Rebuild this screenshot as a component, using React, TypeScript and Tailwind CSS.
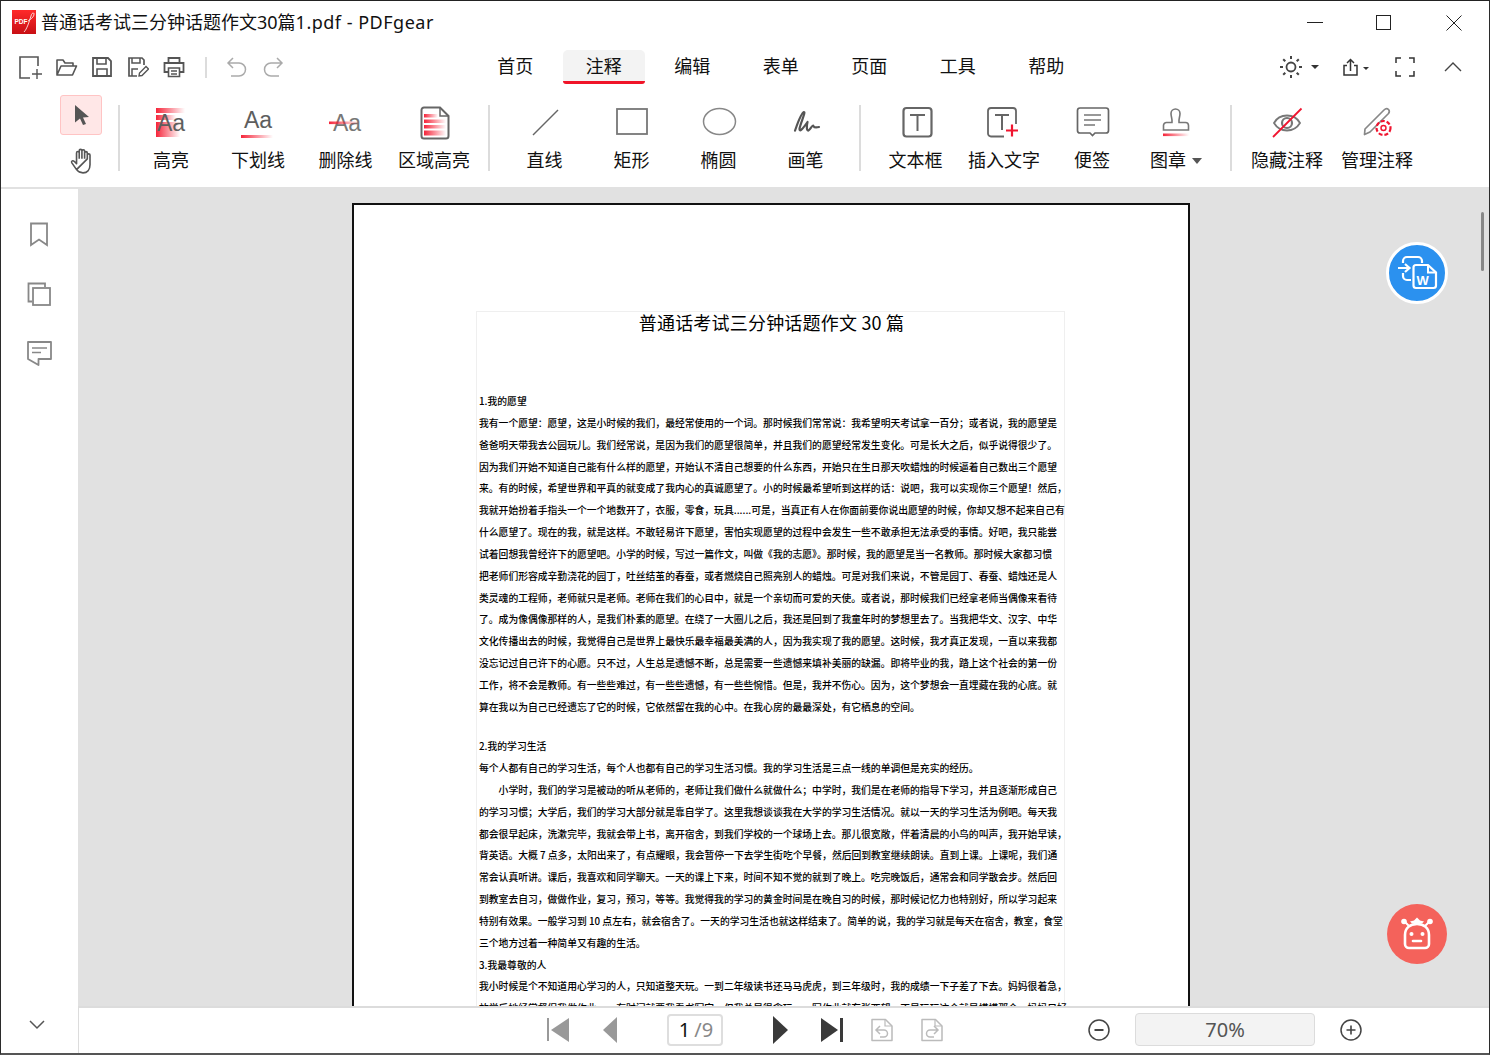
import type { ReactNode } from 'react';

const Icon = ({ children, size = 36, vb = 36, className = '' }: { children: ReactNode; size?: number; vb?: number; className?: string }) => (
  <svg width={size} height={size} viewBox={`0 0 ${vb} ${vb}`} fill="none" className={`block shrink-0 ${className}`}>
    {children}
  </svg>
);

const AaText = ({ x, y, fill = '#5e5e5e' }: { x: number; y: number; fill?: string }) => (
  <text x={x} y={y} fontFamily="Liberation Sans, sans-serif" fontSize="23" fill={fill}>
    Aa
  </text>
);

const ribbonGroups: { pad: number; items: { label: string; w: number; caret?: boolean; icon: ReactNode }[] }[] = [
  {
    pad: 7,
    items: [
      {
        label: '高亮',
        w: 88,
        icon: (
          <Icon>
            <rect x="3" y="4" width="29" height="5" fill="url(#redFade)" />
            <rect x="3" y="11" width="20" height="5" fill="url(#redFade)" />
            <rect x="3" y="18" width="24" height="15" fill="url(#redFade)" />
            <AaText x={4} y={27} />
          </Icon>
        ),
      },
      {
        label: '下划线',
        w: 86,
        icon: (
          <Icon>
            <AaText x={4} y={24} />
            <rect x="1" y="31" width="32" height="3" fill="url(#redFade)" />
          </Icon>
        ),
      },
      {
        label: '删除线',
        w: 89,
        icon: (
          <Icon>
            <AaText x={5} y={27} fill="#777" />
            <rect x="1" y="17.5" width="31" height="2.6" fill="url(#redFade)" />
          </Icon>
        ),
      },
      {
        label: '区域高亮',
        w: 88,
        icon: (
          <Icon>
            <path d="M8 3.5H24L32.5 12V32a2.5 2.5 0 0 1-2.5 2.5H8A2.5 2.5 0 0 1 5.5 32V6A2.5 2.5 0 0 1 8 3.5Z" stroke="#666" strokeWidth="2" />
            <path d="M24 3.5V12H32.5" stroke="#666" strokeWidth="1.5" />
            <rect x="8" y="10" width="14" height="3.5" fill="url(#redFade)" />
            <rect x="8" y="15.5" width="22" height="3.5" fill="url(#redFade)" />
            <rect x="8" y="21" width="22" height="3.5" fill="url(#redFade)" />
            <rect x="8" y="26.5" width="22" height="5" fill="url(#redFade)" />
          </Icon>
        ),
      },
    ],
  },
  {
    pad: 11,
    items: [
      {
        label: '直线',
        w: 87,
        icon: (
          <Icon>
            <path d="M6 31L31 6" stroke="#666" strokeWidth="1.4" />
          </Icon>
        ),
      },
      {
        label: '矩形',
        w: 87,
        icon: (
          <Icon>
            <rect x="3" y="5" width="30" height="25" stroke="#777" strokeWidth="1.8" />
          </Icon>
        ),
      },
      {
        label: '椭圆',
        w: 87,
        icon: (
          <Icon>
            <ellipse cx="18.5" cy="17.5" rx="16" ry="13" stroke="#888" strokeWidth="1.5" />
          </Icon>
        ),
      },
      {
        label: '画笔',
        w: 87,
        icon: (
          <Icon>
            <path d="M7 26.700C10 18 13 9 16 8C18 8 12 20 11.500 25C11.500 28 14 26 19.500 18C18.500 22 18.500 27 20.500 26.500C22 26 24 21.500 25 21.500C26 22 25 24.500 31 23" stroke="#555" strokeWidth="2.200" strokeLinecap="round" strokeLinejoin="round" />
          </Icon>
        ),
      },
    ],
  },
  {
    pad: 10,
    items: [
      {
        label: '文本框',
        w: 89,
        icon: (
          <Icon>
            <rect x="5.500" y="4" width="28" height="28.500" rx="3" stroke="#666" strokeWidth="2.200" />
            <path d="M12 11H27M19.500 11V27" stroke="#666" strokeWidth="2" />
          </Icon>
        ),
      },
      {
        label: '插入文字',
        w: 88,
        icon: (
          <Icon>
            <path d="M18 32.500H5A3 3 0 0 1 2 29.500V7A3 3 0 0 1 5 4H27A3 3 0 0 1 30 7V20" stroke="#666" strokeWidth="1.800" />
            <path d="M9 11H23M16 11V26" stroke="#666" strokeWidth="2" />
            <path d="M20 26.500H32M26 20.500V32.500" stroke="#f0142f" strokeWidth="2.200" />
          </Icon>
        ),
      },
      {
        label: '便签',
        w: 88,
        icon: (
          <Icon>
            <path d="M6 4H32A2.500 2.500 0 0 1 34.500 6.500V26.500A2.500 2.500 0 0 1 32 29H21L18.500 31.500L16 29H6A2.500 2.500 0 0 1 3.500 26.500V6.500A2.500 2.500 0 0 1 6 4Z" stroke="#666" strokeWidth="1.700" />
            <path d="M10 11H27M10 16H27M10 21H21" stroke="#777" strokeWidth="1.600" />
          </Icon>
        ),
      },
      {
        label: '图章',
        w: 84,
        caret: true,
        icon: (
          <Icon className="-ml-[6px]">
            <path d="M15 18.500C15.500 15 14 13 14 9.500A4.500 4.500 0 0 1 23 9.500C23 13 21.500 15 22 18.500H28.500A3 3 0 0 1 31.500 21.500V26H6.500V21.500A3 3 0 0 1 9.500 18.500Z" stroke="#777" strokeWidth="1.600" />
            <rect x="6" y="29.500" width="26" height="2.600" fill="url(#redFade)" />
          </Icon>
        ),
      },
    ],
  },
  {
    pad: 10,
    items: [
      {
        label: '隐藏注释',
        w: 90,
        icon: (
          <Icon>
            <path d="M5 19C8 13.500 13 11.500 18 11.500C23 11.500 28 13.500 31 19C28 24 23 26.500 18 26.500C13 26.500 8 24 5 19Z" stroke="#777" strokeWidth="1.800" />
            <circle cx="18" cy="19" r="5" stroke="#777" strokeWidth="2.200" />
            <path d="M4 33L32.500 4.500" stroke="#f0142f" strokeWidth="1.800" />
          </Icon>
        ),
      },
      {
        label: '管理注释',
        w: 90,
        icon: (
          <Icon>
            <path d="M5.500 30.500L6 25L25 6C26.500 4.500 28.500 4.500 29.500 5.500C30.500 6.500 30.500 8 29.500 9.500L11 28Z" stroke="#888" strokeWidth="1.700" strokeLinejoin="round" />
            <circle cx="24.500" cy="24" r="7" stroke="#f0142f" strokeWidth="2.200" strokeDasharray="4 2" />
            <circle cx="24.500" cy="24" r="2.500" stroke="#f0142f" strokeWidth="1.400" />
          </Icon>
        ),
      },
    ],
  },
];

const tabs = ['首页', '注释', '编辑', '表单', '页面', '工具', '帮助'];

const firstSection = [
  '我有一个愿望：愿望，这是小时候的我们，最经常使用的一个词。那时候我们常常说：我希望明天考试拿一百分；或者说，我的愿望是',
  '爸爸明天带我去公园玩儿。我们经常说，是因为我们的愿望很简单，并且我们的愿望经常发生变化。可是长大之后，似乎说得很少了。',
  '因为我们开始不知道自己能有什么样的愿望，开始认不清自己想要的什么东西，开始只在生日那天吹蜡烛的时候逼着自己数出三个愿望',
  '来。有的时候，希望世界和平真的就变成了我内心的真诚愿望了。小的时候最希望听到这样的话：说吧，我可以实现你三个愿望！然后，',
  '我就开始扮着手指头一个一个地数开了，衣服，零食，玩具......可是，当真正有人在你面前要你说出愿望的时候，你却又想不起来自己有',
  '什么愿望了。现在的我，就是这样。不敢轻易许下愿望，害怕实现愿望的过程中会发生一些不敢承担无法承受的事情。好吧，我只能尝',
  '试着回想我曾经许下的愿望吧。小学的时候，写过一篇作文，叫做《我的志愿》。那时候，我的愿望是当一名教师。那时候大家都习惯',
  '把老师们形容成辛勤浇花的园丁，吐丝结茧的春蚕，或者燃烧自己照亮别人的蜡烛。可是对我们来说，不管是园丁、春蚕、蜡烛还是人',
  '类灵魂的工程师，老师就只是老师。老师在我们的心目中，就是一个亲切而可爱的天使。或者说，那时候我们已经拿老师当偶像来看待',
  '了。成为像偶像那样的人，是我们朴素的愿望。在绕了一大圈儿之后，我还是回到了我童年时的梦想里去了。当我把华文、汉字、中华',
  '文化传播出去的时候，我觉得自己是世界上最快乐最幸福最美满的人，因为我实现了我的愿望。这时候，我才真正发现，一直以来我都',
  '没忘记过自己许下的心愿。只不过，人生总是遗憾不断，总是需要一些遗憾来填补美丽的缺漏。即将毕业的我，踏上这个社会的第一份',
  '工作，将不会是教师。有一些些难过，有一些些遗憾，有一些些惋惜。但是，我并不伤心。因为，这个梦想会一直埋藏在我的心底。就',
  '算在我以为自己已经遗忘了它的时候，它依然留在我的心中。在我心房的最最深处，有它栖息的空间。',
];

const secondSection = [
  '每个人都有自己的学习生活，每个人也都有自己的学习生活习惯。我的学习生活是三点一线的单调但是充实的经历。',
  '　　小学时，我们的学习是被动的听从老师的，老师让我们做什么就做什么；中学时，我们是在老师的指导下学习，并且逐渐形成自己',
  '的学习习惯；大学后，我们的学习大部分就是靠自学了。这里我想谈谈我在大学的学习生活情况。就以一天的学习生活为例吧。每天我',
  '都会很早起床，洗漱完毕，我就会带上书，离开宿舍，到我们学校的一个球场上去。那儿很宽敞，伴着清晨的小鸟的叫声，我开始早读，',
  '背英语。大概 7 点多，太阳出来了，有点耀眼，我会暂停一下去学生街吃个早餐，然后回到教室继续朗读。直到上课。上课呢，我们通',
  '常会认真听讲。课后，我喜欢和同学聊天。一天的课上下来，时间不知不觉的就到了晚上。吃完晚饭后，通常会和同学散会步。然后回',
  '到教室去自习，做做作业，复习，预习，等等。我觉得我的学习的黄金时间是在晚自习的时候，那时候记忆力也特别好，所以学习起来',
  '特别有效果。一般学习到 10 点左右，就会宿舍了。一天的学习生活也就这样结束了。简单的说，我的学习就是每天在宿舍，教室，食堂',
  '三个地方过着一种简单又有趣的生活。',
];

const thirdSection = [
  '我小时候是个不知道用心学习的人，只知道整天玩。一到二年级读书还马马虎虎，到三年级时，我的成绩一下子差了下去。妈妈很着急，',
  '放学后她经常督促我做作业，一有时间就要我看书写字，但我总是很贪玩，一写作业就东张西望，不是玩玩这个就是摸摸那个，妈妈只好',
];

const PdfLines = ({ lines }: { lines: string[] }) => (
  <>
    {lines.map((line) => (
      <p key={line} className="h-[21.85px] whitespace-pre leading-[21.85px]">
        {line}
      </p>
    ))}
  </>
);

const RibbonItem = ({ label, w, caret, icon }: { label: string; w: number; caret?: boolean; icon: ReactNode }) => (
  <div className="flex flex-col items-center" style={{ width: w }}>
    <div className="mt-[12px] flex h-[36px] items-center justify-center">{icon}</div>
    <div className={`mt-[8px] flex h-[24px] items-center gap-[6px] text-[18px] leading-[24px] text-[#111] ${caret ? 'mr-[4px]' : ''}`}>
      <span>{label}</span>
      {caret && <span className="mt-[2px] h-0 w-0 border-x-[5px] border-t-[6px] border-x-transparent border-t-[#555]" />}
    </div>
  </div>
);

const App = () => {
  return (
    <div className="relative flex h-[1055px] w-[1490px] flex-col overflow-hidden border-x border-t border-b-2 border-x-[#2b2b2b] border-b-[#555] border-t-[#222] bg-white font-['Noto_Sans','Noto_Sans_CJK_SC',sans-serif] text-[#111]">
      <svg width="0" height="0" className="absolute">
        <defs>
          <linearGradient id="redFade" x1="0" x2="1" y1="0" y2="0">
            <stop offset="0" stopColor="#f5192f" stopOpacity="0.95" />
            <stop offset="1" stopColor="#f5192f" stopOpacity="0" />
          </linearGradient>
          <linearGradient id="logoRed" x1="0" x2="0" y1="0" y2="1">
            <stop offset="0" stopColor="#ff2a2a" />
            <stop offset="1" stopColor="#c80f14" />
          </linearGradient>
        </defs>
      </svg>

      {/* Title bar */}
      <div className="flex h-[41px] shrink-0 items-center">
        <div className="ml-[11px]">
          <svg width="24" height="24" viewBox="0 0 24 24" className="block">
            <rect width="24" height="24" fill="url(#logoRed)" />
            <text x="2.500" y="14" fontFamily="Liberation Sans, sans-serif" fontSize="6.500" fontWeight="700" fill="#fff">
              PDF
            </text>
            <path d="M12 22C15 19 17 12 19 6C19.500 3 22 2 22 4C22 7 19 9 16 11" stroke="#fff" strokeWidth="0.800" fill="none" />
          </svg>
        </div>
        <span className="ml-[5px] whitespace-pre text-[18px] leading-[24px]">
          普通话考试三分钟话题作文30篇<span className="tracking-[0.5px]">1.pdf - PDFgear</span>
        </span>
        <div className="ml-auto mt-[2px] flex items-center">
          <div className="h-px w-[16px] bg-[#222]" />
          <div className="ml-[53px] h-[15px] w-[15px] border border-[#222]" />
          <Icon size={16} vb={16} className="ml-[55px] mr-[27px]">
            <path d="M0.500 0.500L15.500 15.500M15.500 0.500L0.500 15.500" stroke="#222" strokeWidth="1" />
          </Icon>
        </div>
      </div>

      {/* Quick access + tabs */}
      <div className="flex h-[50px] shrink-0 items-center">
        <div className="ml-[11px] flex w-[180px] items-center">
          <div className="flex w-[36px] justify-center">
            <Icon size={24} vb={24}>
              <path d="M20 11V2H2V23H12" stroke="#555" strokeWidth="1.600" />
              <path d="M14 19H24M19 14V24" stroke="#555" strokeWidth="1.400" />
            </Icon>
          </div>
          <div className="flex w-[37px] justify-center">
            <Icon size={24} vb={24}>
              <path d="M3 20V5H9L11 8H19V11M3 20H18.500L22.500 11H7L3 20Z" stroke="#555" strokeWidth="1.600" strokeLinejoin="round" />
            </Icon>
          </div>
          <div className="flex w-[36px] justify-center">
            <Icon size={22} vb={22}>
              <path d="M2 2H17L20 5V20H2Z" stroke="#555" strokeWidth="1.800" />
              <path d="M6 2V8H15V2M6 20V13H16V20" stroke="#555" strokeWidth="1.600" />
            </Icon>
          </div>
          <div className="flex w-[36px] justify-center">
            <Icon size={22} vb={22}>
              <path d="M10 20H2V2H15L17 4V9" stroke="#555" strokeWidth="1.700" />
              <path d="M5 2V7H13V2M5 20V13H11" stroke="#555" strokeWidth="1.500" />
              <path d="M12 20L12.500 17L19 10.500L21.500 13L15 19.500Z" stroke="#555" strokeWidth="1.400" />
            </Icon>
          </div>
          <div className="flex w-[36px] justify-center">
            <Icon size={22} vb={22}>
              <path d="M5.500 7V2H16.500V7M5.500 16H1.500V7H20.500V16H16.500" stroke="#555" strokeWidth="1.800" />
              <path d="M5.500 12H16.500V20.500H5.500ZM8 15H14M8 18H14" stroke="#555" strokeWidth="1.600" />
            </Icon>
          </div>
        </div>
        <div className="ml-[13px] h-[21px] w-[2px] bg-[#dcdcdc]" />
        <div className="ml-[19px]">
          <Icon size={22} vb={22}>
            <path d="M7 2L2 7L7 12M2 7H13A6.500 6.500 0 0 1 13 20H5" stroke="#aaa" strokeWidth="1.500" />
          </Icon>
        </div>
        <div className="ml-[14px]">
          <Icon size={22} vb={22}>
            <path d="M15 2L20 7L15 12M20 7H9A6.500 6.500 0 0 0 9 20H17" stroke="#aaa" strokeWidth="1.500" />
          </Icon>
        </div>

        <div className="ml-[187px] flex">
          {tabs.map((tab) => (
            <div key={tab} className="flex w-[88.5px] justify-center">
              {tab === '注释' ? (
                <div className="flex h-[34px] w-[82px] items-center justify-center rounded-t-[5px] rounded-b-[3px] border-b-[3px] border-[#f01428] bg-[#f3f3f3] pt-[2px] text-[18px]">
                  {tab}
                </div>
              ) : (
                <div className="flex h-[34px] items-center pb-[1px] text-[18px]">{tab}</div>
              )}
            </div>
          ))}
        </div>

        <div className="ml-[188px] flex items-center">
          <Icon size={24} vb={24}>
            <circle cx="12" cy="12" r="4.500" stroke="#444" strokeWidth="1.800" />
            <path d="M12 1V4M12 20V23M1 12H4M20 12H23M4.200 4.200L6.300 6.300M17.700 17.700L19.800 19.800M4.200 19.800L6.300 17.700M17.700 6.300L19.800 4.200" stroke="#444" strokeWidth="2" />
          </Icon>
          <span className="ml-[8px] h-0 w-0 border-x-[4px] border-t-[4px] border-x-transparent border-t-[#333]" />
          <Icon size={18} vb={18} className="ml-[23px]">
            <path d="M5 7.500H2V17H15V7.500H12" stroke="#333" strokeWidth="1.500" />
            <path d="M8.500 13V1.500M5 5L8.500 1.500L12 5" stroke="#333" strokeWidth="1.500" />
          </Icon>
          <span className="ml-[3px] mt-[3px] h-0 w-0 border-x-[3.5px] border-t-[3.5px] border-x-transparent border-t-[#333]" />
          <Icon size={20} vb={20} className="ml-[26px]">
            <path d="M1 6V1H6M14 1H19V6M1 14V19H6M14 19H19V14" stroke="#333" strokeWidth="1.500" />
          </Icon>
          <Icon size={18} vb={18} className="ml-[29px]">
            <path d="M1 13L9 5L17 13" stroke="#444" strokeWidth="1.400" />
          </Icon>
        </div>
      </div>

      {/* Ribbon */}
      <div className="flex h-[97px] shrink-0 border-b-2 border-[#e1e1e1]">
        <div className="ml-[59px] flex w-[58px] flex-col">
          <div className="mt-[3px] flex h-[40px] w-[42px] items-center justify-center rounded-[3px] border border-[#ffc4c4] bg-[#ffe7e7]">
            <Icon size={22} vb={22}>
              <path d="M5 1L19 13L13 13.500L16 20L13 21L10 14.500L5 18.500Z" fill="#555" />
            </Icon>
          </div>
          <div className="mt-[12px] flex w-[42px] justify-center pl-[4px]">
            <Icon size={28} vb={26}>
              <path d="M7 21L2.500 14.500C2 13 3.500 12 5 13.500L7 15.500V5.500C7 3.800 9.500 3.800 9.500 5.500V11M9.500 11V3.500C9.500 1.800 12 1.800 12 3.500V11M12 11V3.800C12 2.200 14.500 2.200 14.500 3.800V11M14.500 11V5.500C14.500 3.900 17 3.900 17 5.500V11M17 11V7.500C17 6 19.500 6 19.500 7.500V16.500C19.500 21 17 24 13 24C10 24 8.500 23 7 21Z" stroke="#555" strokeWidth="1.500" strokeLinejoin="round" />
            </Icon>
          </div>
        </div>
        {ribbonGroups.map((group, i) => (
          <div key={i} className="flex">
            <div className={`mt-[13px] h-[66px] w-[2px] bg-[#dcdcdc] ${i === 0 ? '' : 'ml-[10px]'}`} />
            <div className="flex" style={{ paddingLeft: group.pad }}>
              {group.items.map((item) => (
                <RibbonItem key={item.label} {...item} />
              ))}
            </div>
          </div>
        ))}
      </div>

      <div className="flex min-h-0 flex-1">
        {/* Sidebar */}
        <div className="flex w-[77px] shrink-0 flex-col items-center">
          <div className="mr-[2px]">
            <Icon size={26} vb={26} className="mt-[32px]">
              <path d="M5 2.500H21V24L13 18.500L5 24Z" stroke="#888" strokeWidth="1.800" />
            </Icon>
            <Icon size={26} vb={26} className="mt-[34px]">
              <path d="M6 20.500H2.500V2.500H19V6" stroke="#888" strokeWidth="1.800" />
              <rect x="7" y="7" width="17" height="17" stroke="#888" strokeWidth="1.800" />
            </Icon>
            <Icon size={26} vb={26} className="mt-[33px]">
              <path d="M2 2H25V19H12.500V25L2 19Z" stroke="#888" strokeWidth="1.800" strokeLinejoin="round" />
              <path d="M6 8H21M6 12.500H15" stroke="#888" strokeWidth="1.600" />
            </Icon>
          </div>
          <div className="mt-auto mb-[20px] mr-[6px]">
            <Icon size={16} vb={16}>
              <path d="M1 4L8 11L15 4" stroke="#555" strokeWidth="1.500" />
            </Icon>
          </div>
        </div>

        <div className="flex min-w-0 flex-1 flex-col">
          {/* Document viewport */}
          <div className="relative min-h-0 flex-1 overflow-hidden bg-[#e1e1e1]">
            <div className="ml-[274px] mt-[14px] h-[1200px] w-[838px] border-2 border-[#111] bg-white pl-[122px] pt-[106px]">
              <div className="h-[1100px] w-[589px] border border-[#efefef] pl-[2px] font-['Noto_Sans_CJK_SC',sans-serif] text-[9.8px] font-medium text-black">
                <h1 className="h-[22px] -translate-y-px text-center text-[18px] font-normal leading-[22px] tracking-[0.2px]">普通话考试三分钟话题作文 30 篇</h1>
                <div className="mt-[57px]">
                  <PdfLines lines={['1.我的愿望']} />
                  <PdfLines lines={firstSection} />
                  <div className="h-[17.500px]" />
                  <PdfLines lines={['2.我的学习生活']} />
                  <PdfLines lines={secondSection} />
                  <PdfLines lines={['3.我最尊敬的人']} />
                  <PdfLines lines={thirdSection} />
                </div>
              </div>
            </div>

            {/* Floating convert button */}
            <div className="absolute left-[1308px] top-[53px] flex h-[62px] w-[62px] items-center justify-center rounded-full border-[3px] border-white bg-[#2b91ef]">
              <Icon size={42} vb={42}>
                <path d="M7 11V9A4 4 0 0 1 11 5H22A4 4 0 0 1 26 9V11M7 21V24A4 4 0 0 0 11 28H15" stroke="#fff" strokeWidth="2.200" />
                <path d="M2 16H13M9 12L13.500 16L9 20" stroke="#fff" strokeWidth="2.200" />
                <path d="M20 13H32L40 20.500V33.500A2.500 2.500 0 0 1 37.500 36H20A2.500 2.500 0 0 1 17.500 33.500V15.500A2.500 2.500 0 0 1 20 13Z" fill="#2b91ef" stroke="#fff" strokeWidth="2.200" />
                <path d="M32 13V20.500H40" stroke="#fff" strokeWidth="2" />
                <text x="20.500" y="32.500" fontFamily="Liberation Sans, sans-serif" fontSize="13" fontWeight="700" fill="#fff">
                  W
                </text>
              </Icon>
            </div>

            {/* Floating assistant button */}
            <div className="absolute left-[1309px] top-[715px] flex h-[60px] w-[60px] items-center justify-center rounded-full bg-[#f4625b]">
              <Icon size={40} vb={40}>
                <path d="M8 21C8 14 13 10 20 10C27 10 32 14 32 21V30A4 4 0 0 1 28 34H12A4 4 0 0 1 8 30Z" stroke="#fff" strokeWidth="2.600" />
                <circle cx="7" cy="7.500" r="2.800" fill="#fff" />
                <circle cx="33" cy="7.500" r="2.800" fill="#fff" />
                <path d="M8 8L12 12M32 8L28 12" stroke="#fff" strokeWidth="2" />
                <path d="M13 7.500L17 6.500L20 3.500L23 6.500L27 7.500L25 9.500H15Z" fill="#fff" />
                <circle cx="14.500" cy="20" r="2" fill="#fff" />
                <circle cx="25.500" cy="20" r="2" fill="#fff" />
                <path d="M16 27H24" stroke="#fff" strokeWidth="2.600" strokeLinecap="round" />
              </Icon>
            </div>

            <div className="absolute left-[1402.500px] top-[23px] h-[59px] w-[3px] rounded-full bg-[#888]" />
          </div>

          {/* Bottom bar */}
          <div className="flex h-[47px] shrink-0 items-center border-l border-t-2 border-[#dcdcdc] bg-white pb-[2px]">
            <div className="ml-[468px] flex items-center">
              <div className="h-[23px] w-[2px] bg-[#999]" />
              <span className="ml-[2px] h-0 w-0 border-y-[12px] border-r-[18px] border-y-transparent border-r-[#999]" />
            </div>
            <span className="ml-[34px] h-0 w-0 border-y-[13px] border-r-[14px] border-y-transparent border-r-[#999]" />
            <div className="ml-[50px] flex h-[32px] w-[56px] items-center justify-center gap-[4px] rounded-[4px] border-2 border-[#dedede] pl-[2px] text-[20px] leading-none">
              <span className="text-[#111]">1</span>
              <span className="text-[#888]">/9</span>
            </div>
            <span className="ml-[50px] h-0 w-0 border-y-[14px] border-l-[15px] border-y-transparent border-l-[#3a3a3a]" />
            <div className="ml-[33px] flex items-center">
              <span className="h-0 w-0 border-y-[12px] border-l-[17px] border-y-transparent border-l-[#3a3a3a]" />
              <div className="ml-[2px] h-[24px] w-[3px] bg-[#3a3a3a]" />
            </div>
            <Icon size={24} vb={24} className="ml-[27px]">
              <path d="M3 1.500H15.500L22 8V22.500H2V1.500Z" stroke="#bbb" strokeWidth="1.500" strokeLinejoin="round" />
              <path d="M15 1.500V8H22" stroke="#bbb" strokeWidth="1.200" />
              <path d="M10 8L6 12L10 16M6 12H14A3.500 3.500 0 0 1 14 19H10" stroke="#bbb" strokeWidth="1.500" />
            </Icon>
            <Icon size={24} vb={24} className="ml-[26px]">
              <path d="M3 1.500H15.500L22 8V22.500H2V1.500Z" stroke="#bbb" strokeWidth="1.500" strokeLinejoin="round" />
              <path d="M15 1.500V8H22" stroke="#bbb" strokeWidth="1.200" />
              <path d="M14 8L18 12L14 16M18 12H10A3.500 3.500 0 0 0 10 19H14" stroke="#bbb" strokeWidth="1.500" />
            </Icon>
            <Icon size={24} vb={24} className="ml-[143px]">
              <circle cx="12" cy="12" r="10" stroke="#444" strokeWidth="1.500" />
              <path d="M7.500 12H16.500" stroke="#444" strokeWidth="2" />
            </Icon>
            <div className="ml-[24px] flex h-[33px] w-[180px] items-center justify-center rounded-[4px] border border-[#dcdcdc] bg-[#f3f3f3] text-[20px] text-[#555]">
              70%
            </div>
            <Icon size={24} vb={24} className="ml-[24px]">
              <circle cx="12" cy="12" r="10" stroke="#444" strokeWidth="1.500" />
              <path d="M7.500 12H16.500M12 7.500V16.500" stroke="#444" strokeWidth="1.600" />
            </Icon>
          </div>
        </div>
      </div>
    </div>
  );
};

export default App;
